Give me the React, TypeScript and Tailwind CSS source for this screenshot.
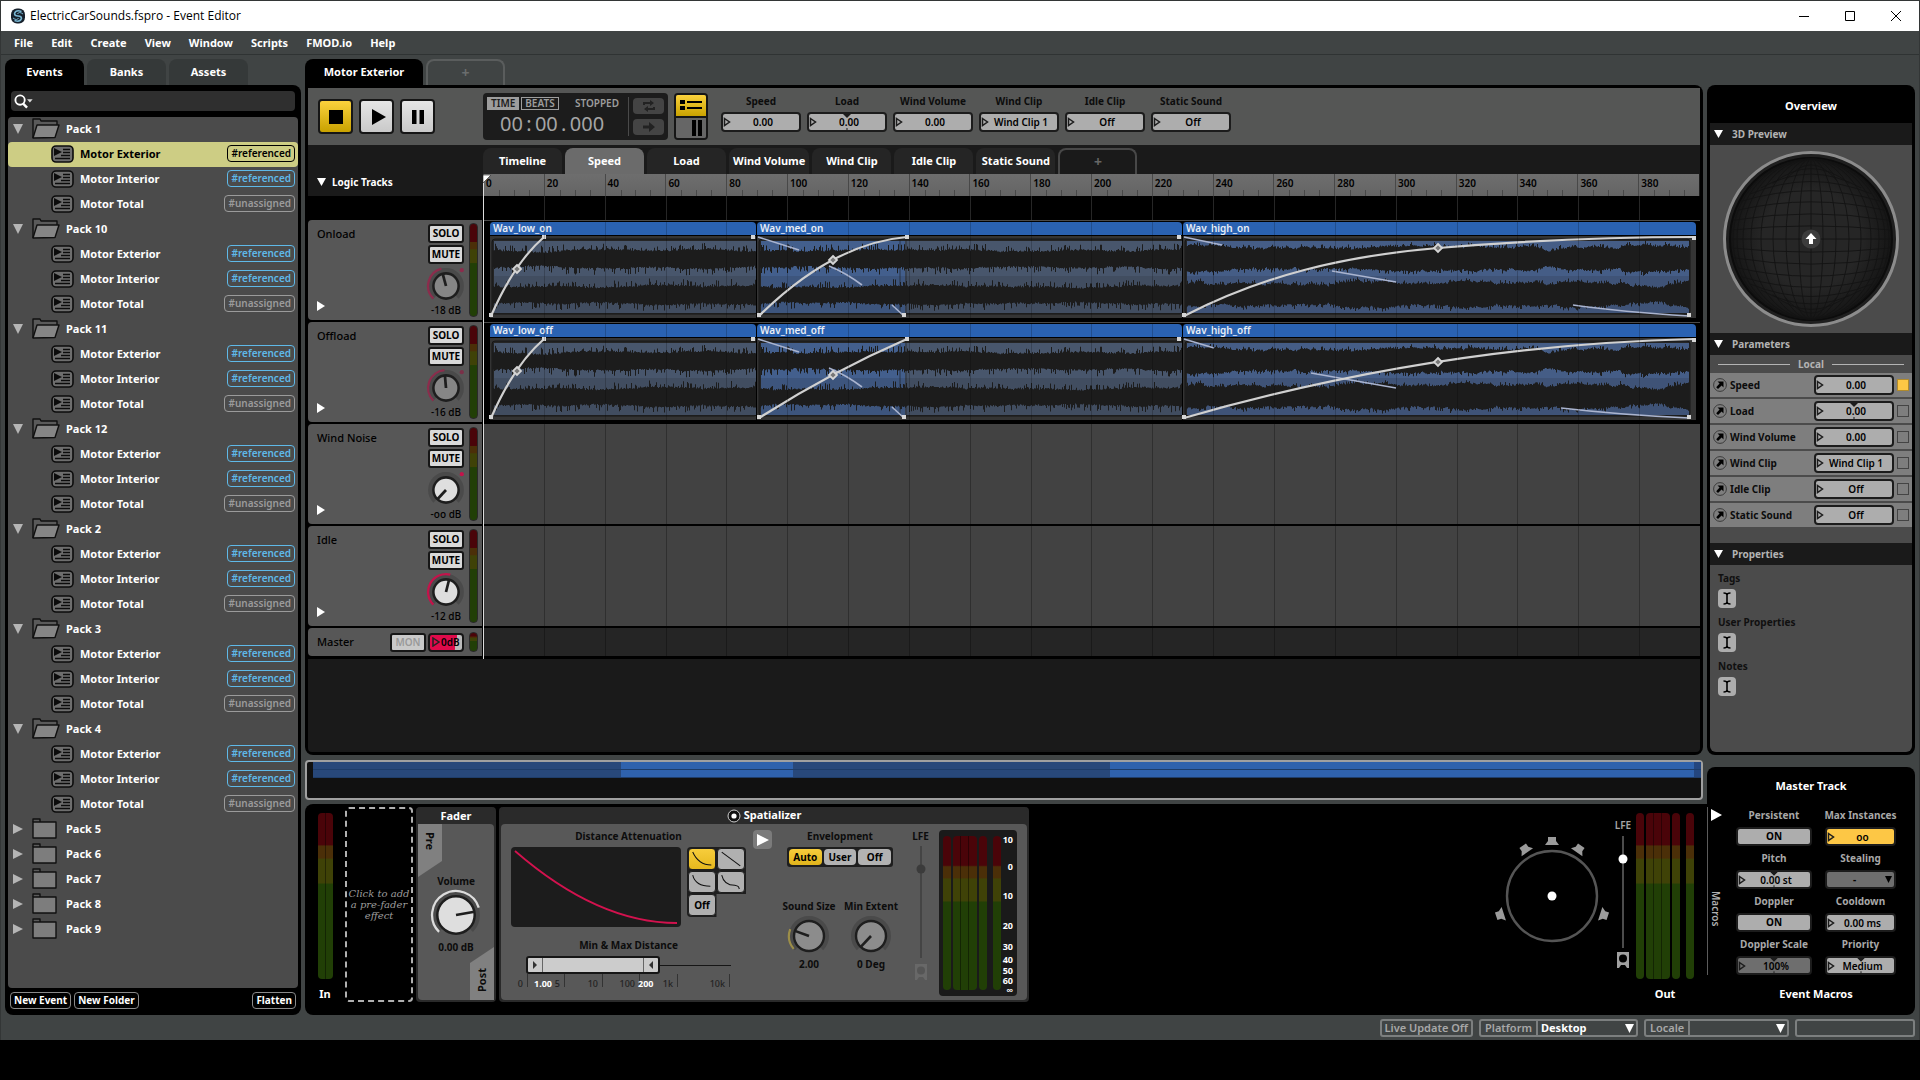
import React from 'react';

/* ---------- shared data ---------- */

const OPEN_PACKS = ['Pack 1', 'Pack 10', 'Pack 11', 'Pack 12', 'Pack 2', 'Pack 3', 'Pack 4'];
const CLOSED_PACKS = ['Pack 5', 'Pack 6', 'Pack 7', 'Pack 8', 'Pack 9'];
const EVENTS = [
  { name: 'Motor Exterior', tag: '#referenced' },
  { name: 'Motor Interior', tag: '#referenced' },
  { name: 'Motor Total', tag: '#unassigned' },
];
const PARAMS = [
  { name: 'Speed', value: '0.00', notch: false, on: true },
  { name: 'Load', value: '0.00', notch: true, on: false },
  { name: 'Wind Volume', value: '0.00', notch: false, on: false },
  { name: 'Wind Clip', value: 'Wind Clip 1', notch: false, on: false },
  { name: 'Idle Clip', value: 'Off', notch: false, on: false },
  { name: 'Static Sound', value: 'Off', notch: false, on: false },
];
const RULER = Array.from({ length: 20 }, (_, i) => i * 20);

const METER =
  'bg-[linear-gradient(to_bottom,#4a0409_0%,#4a0409_19%,#4b2f08_20%,#4b2f08_27%,#3f4207_28%,#3f4207_42%,#213f06_43%,#213f06_100%)]';

/* ---------- small parts ---------- */

function Tri({ dir, className }: { dir: 'down' | 'right'; className?: string }) {
  return (
    <svg viewBox="0 0 10 10" preserveAspectRatio="none" className={className} fill="currentColor" aria-hidden="true">
      <path d={dir === 'down' ? 'M0 0H10L5 10Z' : 'M0 0L10 5L0 10Z'} />
    </svg>
  );
}

type FieldProps = { label: string; value: string; notch?: boolean; tone?: 'light' | 'dim' | 'yellow'; className?: string };

function Field({ label, value, notch, tone = 'light', className = 'h-5' }: FieldProps) {
  const bg = tone === 'yellow' ? 'bg-[#fdc745]' : tone === 'dim' ? 'bg-[#6e6e6e]' : 'bg-[#adadad]';
  return (
    <span className={`relative flex w-full items-center overflow-hidden rounded border-2 border-[#1c1c1c] ${bg} ${className}`}>
      <svg viewBox="0 0 9 10" className="absolute left-0 h-2.5 w-[9px]" fill="none" stroke="#1c1c1c" strokeWidth="1.5">
        <path d="M1.5 1.5L6.5 5L1.5 8.5Z" />
      </svg>
      {notch && (
        <svg viewBox="0 0 8 16" className="absolute left-1/2 top-0 h-full w-2 -translate-x-1/2" fill="#1c1c1c">
          <path d="M0 0H8L4 4ZM3.5 14H4.5V16H3.5Z" />
        </svg>
      )}
      <input
        aria-label={label}
        defaultValue={value}
        className="relative w-full min-w-0 bg-transparent pl-1 text-center text-[10px] leading-4 font-semibold text-black outline-none"
      />
    </span>
  );
}

type KnobProps = {
  label: string;
  size: string;
  angle: number;
  from?: number;
  to?: number;
  arc?: string;
  face?: string;
  radius?: number;
  dot?: string;
};

function polar(r: number, deg: number) {
  const a = ((deg - 90) * Math.PI) / 180;
  return `${(r * Math.cos(a)).toFixed(2)} ${(r * Math.sin(a)).toFixed(2)}`;
}

function arcPath(r: number, a: number, b: number) {
  return `M${polar(r, a)}A${r} ${r} 0 ${b - a > 180 ? 1 : 0} 1 ${polar(r, b)}`;
}

function Knob({ label, size, angle, from, to, arc = '#d2124e', face = '#888888', radius = 12, dot }: KnobProps) {
  const ring = radius + 4;
  return (
    <span className={`relative block shrink-0 ${size}`}>
      <svg viewBox={`${-ring - 3} ${-ring - 3} ${ring * 2 + 6} ${ring * 2 + 6}`} className="size-full">
        <path d={arcPath(ring - 1, -135, 135)} fill="none" stroke="#4a4a4a" strokeWidth="4" />
        {from !== undefined && to !== undefined && (
          <path d={arcPath(ring + 1, from, to)} fill="none" stroke={arc} strokeWidth="2.2" />
        )}
        <circle r={radius} fill={face} stroke="#1e1e1e" strokeWidth="2.4" />
        <path d={`M0 0L${polar(radius, angle)}`} stroke="#1e1e1e" strokeWidth="2.6" />
        {dot && <circle cx={ring - 1} cy={-ring + 1} r="2" fill={dot} />}
      </svg>
      <input type="range" aria-label={label} className="absolute inset-0 size-full opacity-0" />
    </span>
  );
}

function LevelSlider({ line, thumb }: { line: string; thumb: string }) {
  return (
    <span className="relative block h-28 w-3">
      <svg viewBox="0 0 12 112" className="size-full">
        <path d="M6 0V112" stroke={line} strokeWidth="2" />
        <circle cx="6" cy="23" r="4.5" fill={thumb} />
      </svg>
      <input type="range" aria-label="LFE level" className="absolute inset-0 size-full opacity-0 [writing-mode:vertical-lr]" />
    </span>
  );
}

function SubIcon({ color, hole }: { color: string; hole: string }) {
  return (
    <svg viewBox="0 0 12 16" className="h-4 w-3">
      <path d="M0 0H12V16H10L8 13H4L2 16H0Z" fill={color} />
      <circle cx="6" cy="6.5" r="4" fill={hole} />
    </svg>
  );
}

/* ---------- left browser ---------- */

function FolderOpen() {
  return (
    <svg viewBox="0 0 28 21" className="h-[21px] w-7" stroke="#101010" strokeWidth="1.4" strokeLinejoin="round">
      <path d="M1 20V1H8L9 3H25V7" fill="#5a5a5a" />
      <path d="M1 20L5 7H27L23 19.5Z" fill="#858585" />
    </svg>
  );
}

function FolderClosed() {
  return (
    <svg viewBox="0 0 28 21" className="h-[21px] w-7" stroke="#101010" strokeWidth="1.4" strokeLinejoin="round">
      <path d="M1 4V1H8V4" fill="#5a5a5a" />
      <path d="M1 4H24V20H1Z" fill="#7d7d7d" />
    </svg>
  );
}

function EventIcon() {
  return (
    <svg viewBox="0 0 23 18" className="h-[18px] w-[23px]" stroke="#0c0c0c" strokeWidth="1.6">
      <rect x="1" y="1" width="21" height="16" rx="4" fill="#6e6e6e" />
      <path d="M3 3L11 7L3 11Z" fill="#0c0c0c" stroke="none" />
      <path d="M12 4.5H19M12 7.5H19M10 10.5H19M4 13.5H19" />
    </svg>
  );
}

function Browser() {
  return (
    <section className="flex w-[296px] shrink-0 flex-col">
      <div role="tablist" className="flex gap-[3px]">
        <button role="tab" className="h-[26px] w-[79px] rounded-t-lg bg-black text-[11px] font-bold text-white">Events</button>
        <button role="tab" className="h-[26px] w-[79px] rounded-t-lg bg-[#353939] text-[11px] font-bold text-white">Banks</button>
        <button role="tab" className="h-[26px] w-[79px] rounded-t-lg bg-[#353939] text-[11px] font-bold text-white">Assets</button>
      </div>
      <div className="flex flex-1 flex-col rounded-lg rounded-tl-none bg-black px-[3px] pt-1.5 pb-1.5">
        <label className="mx-[3px] mb-1.5 flex h-5 items-center rounded bg-[#2f2f2f] pl-[3px]">
          <svg viewBox="0 0 20 15" className="h-[15px] w-5" fill="none" stroke="white" strokeWidth="2">
            <circle cx="6.5" cy="6" r="5" />
            <path d="M10 10L14 14" strokeWidth="2.6" />
            <path d="M14 5H20L17 8.5Z" fill="#ddd" stroke="none" />
          </svg>
          <input aria-label="Search events" className="w-full bg-transparent text-[11px] text-white outline-none" />
        </label>
        <ul className="flex-1 rounded bg-[#4b4b4b] text-[11px] leading-4 font-bold text-white">
          {OPEN_PACKS.map((pack, p) => (
            <li key={pack}>
              <button className="flex h-[25px] w-full items-center pb-0.5 pl-[5px]">
                <Tri dir="down" className="size-[10px] text-[#b5b5b5]" />
                <span className="ml-[9px]"><FolderOpen /></span>
                <span className="ml-1.5">{pack}</span>
              </button>
              <ul>
                {EVENTS.map((event, e) => {
                  const selected = p === 0 && e === 0;
                  const tagTone = selected
                    ? 'border-black text-black'
                    : event.tag === '#referenced'
                      ? 'border-[#5fb9e8] text-[#5fb9e8]'
                      : 'border-[#9b9b9b] text-[#9b9b9b]';
                  return (
                    <li key={event.name}>
                      <button
                        className={`flex h-[25px] w-full items-center rounded-sm pr-[3px] pb-0.5 pl-[43px] ${selected ? 'bg-[#cdcd84] text-black' : ''}`}
                      >
                        <EventIcon />
                        <span className="ml-1.5">{event.name}</span>
                        <span className={`ml-auto rounded border px-[3px] text-[10px] leading-[15px] font-semibold ${tagTone}`}>{event.tag}</span>
                      </button>
                    </li>
                  );
                })}
              </ul>
            </li>
          ))}
          {CLOSED_PACKS.map((pack) => (
            <li key={pack}>
              <button className="flex h-[25px] w-full items-center pb-0.5 pl-[5px]">
                <Tri dir="right" className="size-[10px] text-[#b5b5b5]" />
                <span className="ml-[9px]"><FolderClosed /></span>
                <span className="ml-1.5">{pack}</span>
              </button>
            </li>
          ))}
        </ul>
        <div className="mt-1 flex gap-[3px] px-0.5 text-[10px] leading-[15px] font-bold text-white">
          <button className="rounded border border-[#8a8a8a] px-[3px]">New Event</button>
          <button className="rounded border border-[#8a8a8a] px-[3px]">New Folder</button>
          <button className="ml-auto rounded border border-[#8a8a8a] px-[3px]">Flatten</button>
        </div>
      </div>
    </section>
  );
}

/* ---------- toolbar ---------- */

function Transport() {
  const light = 'bg-[linear-gradient(#e6e6e6,#c9c9c9)]';
  const yellow = 'bg-[linear-gradient(#fbd23d,#c9a200)]';
  const box = 'flex size-[35px] items-center justify-center rounded border-2 border-[#161616]';
  return (
    <div className="flex h-[57px] shrink-0 items-center bg-[#555655] pl-[10px]">
      <div className="flex w-[165px] gap-1.5">
        <button aria-label="Stop" className={`${box} ${yellow}`}><span className="size-[14px] bg-black" /></button>
        <button aria-label="Play" className={`${box} ${light}`}>
          <svg viewBox="0 0 14 16" className="ml-1 h-4 w-[14px]"><path d="M0 0L14 8L0 16Z" /></svg>
        </button>
        <button aria-label="Pause" className={`${box} ${light}`}>
          <svg viewBox="0 0 12 14" className="h-[14px] w-3"><path d="M0 0H4.5V14H0ZM7.5 0H12V14H7.5Z" /></svg>
        </button>
      </div>
      <div className="flex h-[47px] w-[185px] rounded bg-[#1c1c1c] p-1">
        <div className="flex w-[142px] flex-col border-r border-[#4a4a4a]">
          <div className="flex items-center gap-0.5 text-[10px] leading-[11px] text-[#9d9d9d]">
            <button className="border border-[#9d9d9d] bg-[#9d9d9d] px-[3px] font-semibold text-[#1c1c1c]">TIME</button>
            <button className="border border-[#9d9d9d] px-[3px] font-semibold">BEATS</button>
            <span className="ml-auto pr-[9px] font-semibold">STOPPED</span>
          </div>
          <div className="flex pt-0.5 pl-[13px] text-xl leading-6 text-[#a5a5a5]">
            <span>00</span><span className="w-3 text-center">:</span><span>00</span><span className="w-3 text-center">.</span><span>000</span>
          </div>
        </div>
        <div className="flex flex-col gap-[5px] pt-px pl-1">
          <button aria-label="Loop" className="flex h-4 w-[31px] items-center justify-center rounded-sm bg-[#444444]">
            <svg viewBox="0 0 14 12" className="h-3 w-3.5" fill="none" stroke="#222" strokeWidth="2">
              <path d="M2 5V3H9M12 7V9H5" /><path d="M8 0L12 3L8 6ZM6 6L2 9L6 12Z" fill="#222" stroke="none" />
            </svg>
          </button>
          <button aria-label="Follow" className="flex h-4 w-[31px] items-center justify-center rounded-sm bg-[#444444]">
            <svg viewBox="0 0 12 10" className="h-2.5 w-3" fill="#222"><path d="M0 3.5H6V0L12 5L6 10V6.5H0Z" /></svg>
          </button>
        </div>
      </div>
      <div className="ml-1.5 flex h-[47px] w-[34px] flex-col overflow-hidden rounded border-2 border-[#161616]">
        <button aria-label="Tracks view" className={`flex flex-1 items-center justify-center border-b border-[#161616] ${yellow}`}>
          <svg viewBox="0 0 24 10" className="h-2.5 w-6"><path d="M1 0H6V4H1ZM8 1H23V3H8ZM1 6H6V10H1ZM8 7H23V9H8Z" /></svg>
        </button>
        <button aria-label="Mixer view" className="flex flex-1 items-center justify-end border-t border-[#161616] bg-[#666] pr-1">
          <svg viewBox="0 0 10 16" className="h-4 w-2.5"><path d="M0 0H4V16H0ZM6 0H10V16H6Z" /></svg>
        </button>
      </div>
      <div className="mt-[5px] ml-[13px] flex gap-1.5 self-start">
        {PARAMS.map((p) => (
          <label key={p.name} className="flex w-20 flex-col items-center gap-[3px] text-[10px] leading-4 font-bold text-[#0c0c0c]">
            {p.name}
            <Field label={p.name} value={p.value} notch={p.notch} />
          </label>
        ))}
      </div>
    </div>
  );
}

/* ---------- waveforms ---------- */

function makeRandom(seed: number) {
  let s = seed;
  return () => {
    s = (s * 16807) % 2147483647;
    return s / 2147483647;
  };
}

function wavePath(seed: number, width: number, x0: number, top: number, bottom: number, smooth: boolean) {
  const rnd = makeRandom(seed);
  const upper: string[] = [];
  const lower: string[] = [];
  const reach = smooth ? 4 : 7;
  let drift = 0;
  for (let x = x0; x < width; x += 1) {
    drift = drift * 0.93 + (rnd() - 0.5) * (smooth ? 2 : 0.8);
    const swell = Math.sin(x / 17 + seed) * 0.8 + Math.sin(x / 41 + seed * 2) * 0.8;
    const spikeA = rnd() > 0.66 ? rnd() * reach : rnd() * 1.5;
    const spikeB = rnd() > 0.66 ? rnd() * reach : rnd() * 1.5;
    const body = drift + swell;
    const hi = (top - body * 0.8 - spikeA).toFixed(1);
    const lo = (bottom + body * 0.8 + spikeB).toFixed(1);
    upper.push(`${x} ${hi}L${x + 1} ${hi}`);
    lower.unshift(`${x + 1} ${lo}L${x} ${lo}`);
  }
  return `M${upper.join('L')}L${lower.join('L')}Z`;
}

type Clip = {
  id: string;
  seed: number;
  width: number;
  tint: string;
  hot?: number;
  smooth?: boolean;
  curve: string;
  ends: [number, number][];
  node: [number, number];
  ghosts: string[];
};

const LOW = { seed: 77, width: 267, tint: '#48566c', curve: 'M2 80Q25 27 55 1', ends: [[2, 79], [55, 1], [264, 1]] as [number, number][], node: [28, 33] as [number, number], ghosts: [] as string[] };
const MED = { seed: 1931, width: 426, tint: '#48566c', hot: 148, ends: [[3, 79], [151, 1], [423, 1], [148, 79]] as [number, number][] };
const HIGH = { seed: 4242, width: 514, tint: '#455d86', smooth: true, ends: [[2, 79], [512, 2], [507, 79]] as [number, number][] };

const MED_GHOSTS = ['M2 1L43 14', 'M73 30Q90 37 106 49', 'M136 69L148 80'];

const CLIPS: Record<string, Clip[]> = {
  Onload: [
    { ...LOW, id: 'Wav_low_on' },
    { ...MED, id: 'Wav_med_on', curve: 'M3 80Q77 7 151 1', node: [77, 24], ghosts: MED_GHOSTS },
    { ...HIGH, id: 'Wav_high_on', curve: 'M2 80C80 40 160 20 256 12S430 1 512 1', node: [256, 12], ghosts: ['M2 1L40 9', 'M150 35L214 46', 'M391 69Q440 76 507 80'] },
  ],
  Offload: [
    { ...LOW, id: 'Wav_low_off' },
    { ...MED, id: 'Wav_med_off', curve: 'M3 80Q77 33 151 1', node: [77, 37], ghosts: MED_GHOSTS },
    { ...HIGH, id: 'Wav_high_off', curve: 'M2 80Q256 7 512 1', node: [256, 24], ghosts: ['M2 1L32 10', 'M129 35L214 50', 'M379 70Q440 77 507 80'] },
  ],
};

function ClipBody({ clip }: { clip: Clip }) {
  const w = clip.width;
  const left = 4;
  const right = clip.smooth ? w - 7 : w;
  const [t1, b1, t2, b2] = clip.smooth ? [12, 33, 48, 69] : [15, 31, 51, 67];
  return (
    <svg viewBox={`0 0 ${w} 82`} preserveAspectRatio="none" className="block h-[82px] w-full overflow-visible">
      <rect width={w} height="82" fill="#343434" />
      <rect x={left - 1} y="3" width={right - left + 2} height="75" rx="3" fill="#252525" stroke="#161616" />
      <rect x={left + 1} y="5" width={right - left - 1} height="72" fill={clip.tint} />
      {clip.hot && <rect x={left + 1} y="5" width={clip.hot - left} height="72" fill="#435f8d" />}
      <rect x={left + 1} y="40" width={right - left - 1} height="37" fill="#1e1e1e" opacity="0.14" />
      <path d={wavePath(clip.seed, right, left, t1, b1, !!clip.smooth)} fill="#1c1c1c" />
      <path d={wavePath(clip.seed + 9, right, left, t2, b2, !!clip.smooth)} fill="#1c1c1c" />
      {clip.hot && <path d={`M${clip.hot - 4} 4V77M${clip.hot + 2} 2V80`} stroke="#1c1c1c" opacity="0.6" />}
      <path d="M0.5 0V82" stroke="#000" />
      {clip.ghosts.map((d) => (
        <path key={d} d={d} fill="none" stroke="#aab4cf" strokeWidth="1.6" />
      ))}
      <path d={clip.curve} fill="none" stroke="#d0d0d0" strokeWidth="2.2" />
      {clip.ends.map(([x, y]) => (
        <rect key={`${x}-${y}`} x={x - 2} y={y - 2} width="4" height="4" fill="#d6d6d6" />
      ))}
      <path
        d={`M${clip.node[0]} ${clip.node[1] - 4}l4 4l-4 4l-4 -4Z`}
        fill="#777"
        stroke="#d6d6d6"
        strokeWidth="1.8"
      />
    </svg>
  );
}

function GridLines({ className }: { className: string }) {
  return (
    <div className={`pointer-events-none absolute inset-0 grid grid-cols-20 ${className}`}>
      {RULER.map((n) => (
        <span key={n} className="border-l border-inherit first:border-transparent" />
      ))}
    </div>
  );
}

function Lane({ name }: { name: string }) {
  const clips = CLIPS[name];
  return (
    <div className={`relative flex-1 ${clips ? 'border-t border-[#4a4a4a] bg-black' : 'bg-[#424242]'}`}>
      {clips && (
        <div className="grid grid-cols-[267fr_426fr_514fr] pt-px pr-1 pl-1.5">
          {clips.map((clip) => (
            <div key={clip.id} className="min-w-0">
              <p className="h-[13px] truncate rounded-t-sm border-l border-black bg-[#2a62b2] pl-[3px] text-[10px] leading-[13px] font-semibold text-white/90">
                {clip.id}
              </p>
              <div className="border-t border-black"><ClipBody clip={clip} /></div>
            </div>
          ))}
        </div>
      )}
      <GridLines className={clips ? 'border-black/20' : 'border-[#2f2f2f]'} />
    </div>
  );
}

const PALE = 'rounded-[3px] border-2 border-[#161616] bg-[#d9d9d9] text-[10px] leading-[15px] font-bold text-black w-9';

const TRACKS = [
  { name: 'Onload', db: '-18 dB', angle: -15, arc: '#8c2c4c', from: -135, to: -15, face: '#868686', dot: '#8c2c4c' },
  { name: 'Offload', db: '-16 dB', angle: -5, arc: '#8c2c4c', from: -135, to: -5, face: '#868686', dot: '#7a3048' },
  { name: 'Wind Noise', db: '-oo dB', angle: -137, face: '#dedede', dot: '#c4134b' },
  { name: 'Idle', db: '-12 dB', angle: 14, arc: '#c4134b', from: -135, to: 14, face: '#dedede' },
];

function Tracks() {
  return (
    <div className="flex flex-col gap-0.5 bg-black pb-[3px]">
      {TRACKS.map((t) => (
        <div key={t.name} className="flex h-[100px]">
          <div className="flex w-[174px] shrink-0 justify-between rounded-l bg-[#575757] py-[3px] pr-1 pl-[9px]">
            <div className="flex flex-col justify-between pt-0.5 pb-1.5">
              <span className="text-[11px] leading-[18px] font-medium text-black">{t.name}</span>
              <button aria-label={`Expand ${t.name}`}><Tri dir="right" className="h-[10px] w-2 text-white" /></button>
            </div>
            <div className="flex gap-[5px]">
              <div className="flex w-9 flex-col items-center gap-0.5 pt-px">
                <button className={`${PALE} h-[19px]`}>SOLO</button>
                <button className={`${PALE} h-[19px]`}>MUTE</button>
                <Knob label={`${t.name} volume`} size="size-[40px]" angle={t.angle} from={t.from} to={t.to} arc={t.arc} face={t.face} dot={t.dot} />
                <span className="-mt-[5px] text-[10px] leading-[14px] font-medium whitespace-nowrap text-black">{t.db}</span>
              </div>
              <span className={`w-[9px] rounded-sm border border-[#2a2a2a] ${METER}`} />
            </div>
          </div>
          <span className="w-px bg-black" />
          <Lane name={t.name} />
        </div>
      ))}
      <div className="flex h-7">
        <div className="flex w-[174px] shrink-0 items-center rounded-l bg-[#575757] pr-1 pl-[9px]">
          <span className="text-[11px] font-medium text-black">Master</span>
          <button className="ml-auto h-[19px] w-9 rounded-[3px] border-2 border-[#161616] bg-[#c9c9c9] text-[10px] leading-[15px] font-semibold text-[#999]">MON</button>
          <button className="ml-0.5 flex h-[19px] w-9 items-center rounded border-2 border-[#161616] bg-[linear-gradient(100deg,#df0b4b_78%,#bbb_79%)] pl-0.5 text-[10px] leading-[15px] font-semibold text-black">
            <svg viewBox="0 0 8 10" className="mr-px h-2.5 w-2 shrink-0" fill="none" stroke="#222" strokeWidth="1.5"><path d="M1 1L7 5L1 9Z" /></svg>
            0dB
          </button>
          <span className={`ml-[5px] h-5 w-[9px] rounded-sm border border-[#2a2a2a] ${METER}`} />
        </div>
        <span className="w-px bg-black" />
        <div className="relative flex-1 bg-[#252525]"><GridLines className="border-[#1a1a1a]" /></div>
      </div>
    </div>
  );
}

/* ---------- editor ---------- */

function Editor() {
  const tab = 'h-[26px] min-w-[79px] rounded-t-lg px-1 text-[11px] font-bold text-white';
  return (
    <>
      <div role="tablist" className="flex gap-[3px]">
        <button role="tab" className="h-[26px] w-[118px] rounded-t-lg bg-black text-[11px] font-bold text-white">Motor Exterior</button>
        <button aria-label="New tab" className="h-[26px] w-[79px] rounded-t-lg border-2 border-b-0 border-[#5a5d5d] text-sm font-bold text-[#6a6d6d]">+</button>
      </div>
      <div className="flex min-h-0 flex-1 flex-col rounded-lg rounded-tl-none bg-black p-[3px]">
        <Transport />
        <div className="relative">
          <div className="flex bg-[#1a1a1a]">
            <div className="flex w-[175px] shrink-0 items-end pb-[6px] pl-[9px]">
              <button className="flex items-center gap-1.5 text-[10px] leading-4 font-bold text-white">
                <Tri dir="down" className="h-2 w-[9px]" />
                Logic Tracks
              </button>
            </div>
            <div className="min-w-0 flex-1">
              <div role="tablist" className="flex gap-[3px] pt-[3px]">
                {['Timeline', ...PARAMS.map((p) => p.name)].map((name) => (
                  <button key={name} role="tab" className={`${tab} ${name === 'Speed' ? 'bg-[#6b6b6b]' : 'bg-[#252525]'}`}>{name}</button>
                ))}
                <button aria-label="Add sheet" className="h-[26px] w-[79px] rounded-t-lg border-2 border-b-0 border-[#484848] text-sm font-bold text-[#666]">+</button>
              </div>
              <div className="mr-px grid h-[22px] grid-cols-20 bg-[linear-gradient(#6e6e6e,#646464)] text-[10px] leading-[18px] font-semibold text-black">
                {RULER.map((n) => (
                  <div key={n} className="relative border-l border-[#484848] pl-0.5">
                    {n}
                    <div className="absolute inset-x-0 bottom-0 grid h-1.5 grid-cols-4">
                      <span /><span className="border-l border-[#484848]" /><span className="border-l border-[#484848]" /><span className="border-l border-[#484848]" />
                    </div>
                  </div>
                ))}
              </div>
            </div>
          </div>
          <div className="flex h-6 bg-black pl-[175px]"><div className="relative flex-1"><GridLines className="border-[#262626]" /></div></div>
          <Tracks />
          <div className="absolute top-[30px] bottom-0 left-[175px] w-px bg-[#dcdcdc]">
            <svg viewBox="0 0 9 8" className="h-2 w-[9px]"><path d="M0 0H8L0 8Z" fill="#fff" stroke="#222" strokeWidth="0.6" /></svg>
          </div>
        </div>
        <div className="flex-1 rounded-b bg-[#1a1a1a]" />
      </div>
    </>
  );
}

function OverviewStrip() {
  return (
    <div className="mt-[5px] h-10 rounded-sm border-2 border-[#a0a0a0] bg-[#111111] pl-1.5">
      {[0, 1].map((row) => (
        <div key={row} className="flex h-2 border-b border-[#1f3d69]">
          <span className="basis-[22.2%] bg-[#28487a]" />
          <span className="basis-[12.4%] bg-[#2f62ad]" />
          <span className="basis-[22.8%] bg-[#28487a]" />
          <span className="flex-1 bg-[#2f62ad]" />
          <span className="w-[7px] bg-[#24467f]" />
        </div>
      ))}
    </div>
  );
}

/* ---------- effect deck ---------- */

function MeterBank({ groups, className }: { groups: string[]; className: string }) {
  return (
    <div className={`flex ${className}`}>
      {groups.map((g, i) => (
        <span key={i} className={`${g} ${METER}`} />
      ))}
    </div>
  );
}

const OUT_BARS = [
  'w-2 rounded-sm mr-0.5',
  'w-2 rounded-l-sm border-r border-black/40',
  'w-2 border-r border-black/40',
  'w-2 rounded-r-sm mr-0.5',
  'w-2 rounded-sm mr-1.5',
  'w-2 rounded-sm',
];

function Spatializer() {
  const label = 'text-[10px] leading-4 font-bold text-[#0c0c0c] text-center whitespace-nowrap';
  const curves = ['M4 3C8 12 14 17 24 17', 'M4 3L24 18', 'M4 3C6 11 12 15 23 15', 'M4 3C6 12 12 14 18 14C22 15 22 15 23 18'];
  return (
    <section className="flex w-[530px] shrink-0 flex-col rounded border-2 border-t-0 border-[#2a2a2a] bg-[#2a2a2a]">
      <h3 className="flex h-[17px] items-center justify-center gap-[3px] text-[11px] font-bold text-white">
        <svg viewBox="0 0 14 14" className="size-3.5"><circle cx="7" cy="7" r="6" fill="#111" stroke="#ccc" /><circle cx="7" cy="7" r="2.6" fill="#fff" /></svg>
        Spatializer
      </h3>
      <div className="flex flex-1 rounded-sm bg-[#585858]">
        <div className="w-[245px] pt-1 pl-[10px]">
          <p className={label}>Distance Attenuation</p>
          <div className="mt-[3px] flex gap-1.5">
            <svg viewBox="0 0 170 80" className="h-20 w-[170px] rounded bg-[#1c1c1c]">
              <path d="M4 4C50 44 105 76 166 76" fill="none" stroke="#d2124e" strokeWidth="1.8" />
            </svg>
            <div className="grid w-[59px] grid-cols-2 gap-px self-start rounded bg-[#1e1e1e] p-px [clip-path:polygon(0_0,100%_0,100%_67%,50%_67%,50%_100%,0_100%)]">
              {curves.map((d, i) => (
                <button
                  key={d}
                  aria-label={`Curve ${i + 1}`}
                  className={`h-[22px] rounded-sm border border-[#1e1e1e] ${i === 0 ? 'bg-[linear-gradient(#f7cd3c,#e6b81e)]' : 'bg-[#b0b0b0]'}`}
                >
                  <svg viewBox="0 0 28 21" className="size-full" fill="none" stroke="#111" strokeWidth="1.1"><path d={d} /></svg>
                </button>
              ))}
              <button className="h-[22px] rounded-sm border border-[#1e1e1e] bg-[#b0b0b0] text-[10px] font-bold text-black">Off</button>
            </div>
          </div>
          <p className={`${label} mt-[10px]`}>Min &amp; Max Distance</p>
          <div className="mt-[3px] ml-[15px] flex w-[205px] items-center">
            <div className="relative flex h-[18px] w-[134px] items-center justify-between rounded-[3px] border-2 border-[#161616] bg-[#cccccc] text-[#333]">
              <span className="flex h-full w-[15px] items-center justify-center border-r border-[#666]"><Tri dir="right" className="h-2 w-1" /></span>
              <span className="flex h-full w-[15px] items-center justify-center border-l border-[#666]"><Tri dir="right" className="h-2 w-1 rotate-180" /></span>
              <input type="range" aria-label="Distance range" className="absolute inset-0 size-full opacity-0" />
            </div>
            <span className="h-px flex-1 bg-[#161616]" />
          </div>
          <div className="flex h-[13px] w-[219px] text-[9px] leading-5 font-medium text-[#222] *:flex *:border-r *:border-[#333] *:pr-1">
            <span className="w-[17px] justify-end">0</span>
            <span className="w-[37px] justify-between pl-1.5"><b className="text-white">1.00</b>5</span>
            <span className="w-[38px] justify-end">10</span>
            <span className="w-[37px] justify-end">100</span>
            <span className="w-[38px] justify-between"><b className="-ml-0.5 text-white">200</b>1k</span>
            <span className="w-[52px] justify-end">10k</span>
          </div>
        </div>
        <div className="w-8 pt-1.5 pl-[7px]">
          <button aria-label="Preview" className="flex size-[19px] items-center justify-center rounded bg-[#7b7b7b]"><Tri dir="right" className="size-3 text-white" /></button>
        </div>
        <div className="w-[124px] pt-1">
          <p className={label}>Envelopment</p>
          <div className="mx-auto mt-[3px] flex w-[106px] gap-0.5 rounded-[3px] bg-[#1e1e1e] p-0.5 text-[10px] leading-4 font-bold text-black">
            <button className="flex-1 rounded-sm bg-[linear-gradient(#f7cd3c,#e0b41c)]">Auto</button>
            <button className="flex-1 rounded-sm bg-[#b2b2b2]">User</button>
            <button className="flex-1 rounded-sm bg-[#b2b2b2]">Off</button>
          </div>
          <div className="mt-[31px] grid grid-cols-2">
            <div className="flex flex-col items-center">
              <p className={label}>Sound Size</p>
              <Knob label="Sound size" size="size-[44px]" angle={-70} from={-130} to={-70} arc="#9c8e48" radius={15} face="#8c8c8c" />
              <p className={`${label} -mt-0.5`}>2.00</p>
            </div>
            <div className="flex flex-col items-center">
              <p className={label}>Min Extent</p>
              <Knob label="Minimum extent" size="size-[44px]" angle={-137} radius={15} face="#8c8c8c" />
              <p className={`${label} -mt-0.5`}>0 Deg</p>
            </div>
          </div>
        </div>
        <div className="flex w-[37px] flex-col items-center pt-1">
          <p className={`${label} mb-0.5`}>LFE</p>
          <LevelSlider line="#444444" thumb="#3b3b3b" />
          <span className="mt-1.5"><SubIcon color="#686868" hole="#555555" /></span>
        </div>
        <div className="mt-1.5 flex h-[166px] w-[78px] justify-between rounded bg-[#1a1a1a] p-1 pt-1.5 pb-1.5">
          <MeterBank className="h-full" groups={OUT_BARS} />
          <div className="relative w-3 text-right text-[9px] leading-[9px] font-bold text-white">
            {[['10', 3], ['0', 30], ['10', 59], ['20', 89], ['30', 110], ['40', 123], ['50', 134], ['60', 144], ['∞', 153]].map(([t, y], i) => (
              <span key={i} className="absolute right-0 -translate-y-1/2" style={{ top: y }}>{t}</span>
            ))}
          </div>
        </div>
      </div>
    </section>
  );
}

function Surround() {
  return (
    <svg viewBox="0 0 116 112" className="mt-7 h-28 w-[116px]" role="img" aria-label="Surround panner">
      <circle cx="58" cy="61" r="45" fill="none" stroke="#555" strokeWidth="2.4" />
      <circle cx="58" cy="61" r="4.5" fill="#fff" />
      {[[58, 6, 0], [31, 14, -35], [85, 14, 35], [6, 80, -108], [110, 80, 108]].map(([x, y, r]) => (
        <path key={`${x}-${y}`} transform={`translate(${x} ${y}) rotate(${r})`} d="M-4 -4H4V0L7 4H-7L-4 0Z" fill="#9b9b9b" />
      ))}
    </svg>
  );
}

function Deck() {
  const flap =
    'flex h-[53px] w-6 shrink-0 bg-[#808080] pt-2 text-[11px] leading-6 [clip-path:polygon(0_0,100%_0,100%_70%,0_100%)] [writing-mode:vertical-rl]';
  return (
    <div className="mt-1 -mr-1 flex rounded-tl-lg rounded-bl-lg bg-black pt-[3px] pb-[13px]">
      <div className="flex w-10 shrink-0 flex-col items-center pt-1.5">
        <MeterBank className="h-[166px]" groups={['w-2 rounded-l-sm border-r border-black/40', 'w-[7px] rounded-r-sm']} />
        <span className="mt-[7px] text-[11px] leading-4 font-bold text-white">In</span>
      </div>
      <button className="h-[195px] w-[68px] shrink-0 rounded border-2 border-dashed border-[#b0b0b0] font-['DejaVu_Serif',serif] text-[10px] leading-[11px] text-[#9c9c9c] italic">
        Click to add a pre-fader effect
      </button>
      <section className="mx-[3px] flex w-20 shrink-0 flex-col rounded border-2 border-t-0 border-[#2a2a2a] bg-[#2a2a2a]">
        <h3 className="text-center text-[11px] leading-[17px] font-bold text-white">Fader</h3>
        <div className="flex flex-1 flex-col rounded-sm bg-[#585858] text-[10px] font-bold text-[#0c0c0c]">
          <div className={flap}>Pre</div>
          <div className="-mt-1 flex flex-col items-center">
            <span className="leading-4">Volume</span>
            <Knob label="Fader volume" size="size-[52px]" angle={80} from={-135} to={72} arc="#dcdcdc" radius={18} face="#dedede" />
            <span className="-mt-0.5 leading-4">0.00 dB</span>
          </div>
          <div className={`-mt-2 rotate-180 self-end ${flap}`}>Post</div>
        </div>
      </section>
      <Spatializer />
      <div className="ml-auto flex pr-[13px]">
        <Surround />
        <div className="flex w-[26px] flex-col items-center pt-[10px]">
          <span className="mb-[3px] text-[10px] leading-4 font-semibold text-[#a5a5a5]">LFE</span>
          <LevelSlider line="#4c4c4c" thumb="#ffffff" />
          <span className="mt-1"><SubIcon color="#a0a0a0" hole="#000000" /></span>
        </div>
        <div className="flex flex-col items-center pt-1.5">
          <MeterBank className="h-[166px]" groups={OUT_BARS} />
          <span className="mt-[7px] text-[11px] leading-4 font-bold text-white">Out</span>
        </div>
      </div>
    </div>
  );
}

/* ---------- right column ---------- */

function SectionHead({ title }: { title: string }) {
  return (
    <button className="flex h-[22px] w-full items-center gap-[9px] bg-[#1a1a1a] pl-1 text-[10px] font-bold text-[#b3b3b3]">
      <Tri dir="down" className="h-2 w-[9px] text-white" />
      {title}
    </button>
  );
}

function Sphere() {
  const rings = [12, 25, 38, 50, 60, 68, 74, 78];
  return (
    <svg viewBox="-88 -88 176 176" className="mx-auto size-44" role="img" aria-label="3D preview">
      <defs>
        <radialGradient id="ball">
          <stop offset="0.6" stopColor="#262626" />
          <stop offset="1" stopColor="#151515" />
        </radialGradient>
      </defs>
      <circle r="86.5" fill="#1f1f1f" stroke="#8c8c8c" strokeWidth="3" />
      <circle r="81" fill="url(#ball)" stroke="#0c0c0c" strokeWidth="2" />
      <g fill="none" stroke="#131313" strokeWidth="0.9">
        <path d="M-80 0H80M0 -80V80" />
        {rings.map((r) => {
          const half = Math.sqrt(6400 - r * r);
          const edge = r * 0.75;
          const peak = r * 1.1 + 4;
          const reach = Math.min(Math.sqrt(6400 - edge * edge), half + 8);
          return (
            <g key={r}>
              <ellipse rx={r} ry="80" />
              <path d={`M${-reach} ${-edge}Q0 ${-peak} ${reach} ${-edge}`} />
              <path d={`M${-reach} ${edge}Q0 ${peak} ${reach} ${edge}`} />
            </g>
          );
        })}
      </g>
      <circle r="9.5" fill="#3c3c3c" />
      <path d="M0 -6L5.5 0H2V5H-2V0H-5.5Z" fill="#fff" />
    </svg>
  );
}

function OverviewPanel() {
  return (
    <section className="flex flex-1 flex-col rounded-lg bg-black p-[3px]">
      <h2 className="text-center text-[11px] leading-[35px] font-bold text-white">Overview</h2>
      <SectionHead title="3D Preview" />
      <div className="flex h-[188px] items-center bg-[#4b4b4b]"><Sphere /></div>
      <SectionHead title="Parameters" />
      <div className="flex h-[18px] items-center gap-2 bg-[#4b4b4b] px-2 text-[10px] font-bold text-[#b3b3b3]">
        <span className="h-px flex-1 bg-[#b3b3b3]" />Local<span className="h-px flex-1 bg-[#b3b3b3]" />
      </div>
      <ul className="flex flex-col gap-0.5 bg-[#4b4b4b] pb-4">
        {PARAMS.map((p) => (
          <li key={p.name} className="flex h-6 items-center bg-[#7e7e7e] px-[3px] text-[10px] font-bold text-[#0c0c0c]">
            <svg viewBox="0 0 14 14" className="size-3.5">
              <circle cx="7" cy="7" r="6.4" fill="none" stroke="#333" strokeWidth="0.9" />
              <path d="M4.5 3.5H10.5V9.5L8.6 7.6L5 11L3.2 9.2L6.6 5.6Z" />
            </svg>
            <span className="ml-[3px] flex-1">{p.name}</span>
            <span className="w-20"><Field label={`${p.name} value`} value={p.value} notch={p.notch} /></span>
            <input
              type="checkbox"
              aria-label={`${p.name} active`}
              defaultChecked={p.on}
              className="ml-[3px] size-3 appearance-none border border-[#444] checked:border-[#b08a2c] checked:bg-[#fdc745]"
            />
          </li>
        ))}
      </ul>
      <SectionHead title="Properties" />
      <div className="flex flex-1 flex-col gap-1.5 rounded-b-md bg-[#4b4b4b] px-2 pt-[5px] text-[10px] leading-4 font-bold text-[#101010]">
        {['Tags', 'User Properties', 'Notes'].map((name) => (
          <div key={name} className="flex flex-col items-start gap-[3px]">
            <span>{name}</span>
            <button aria-label={`Edit ${name}`} className="flex h-[19px] w-[18px] items-center justify-center rounded bg-[#adadad]">
              <svg viewBox="0 0 8 13" className="h-[13px] w-2" fill="none" stroke="#000" strokeWidth="1.6"><path d="M0.5 1Q4 1 4 3Q4 1 7.5 1M4 3V10M0.5 12Q4 12 4 10Q4 12 7.5 12" /></svg>
            </button>
          </div>
        ))}
      </div>
    </section>
  );
}

function MacroCell({ title, children }: { title: string; children: React.ReactNode }) {
  return (
    <div className="flex flex-col items-center gap-1 text-[10px] leading-4 font-bold whitespace-nowrap text-[#a8a8a8]">
      {title}
      {children}
    </div>
  );
}

function MasterPanel() {
  const toggle = 'h-[19px] w-full rounded border-2 border-[#1c1c1c] bg-[#adadad] text-[10px] leading-[15px] font-bold text-black';
  return (
    <section className="mt-3 flex flex-col rounded-lg rounded-bl-none bg-black pb-[13px]">
      <h2 className="text-center text-[11px] leading-[38px] font-bold text-white">Master Track</h2>
      <div className="mt-0.5 flex pr-[19px]">
        <div className="flex w-[29px] shrink-0 flex-col items-start border-l border-[#5c5c5c] pt-0.5 pl-[3px]">
          <button aria-label="Collapse macros"><Tri dir="right" className="h-3 w-[11px] text-white" /></button>
          <span className="mt-[70px] text-[10px] leading-[10px] font-semibold text-[#b0b0b0] [writing-mode:vertical-rl]">Macros</span>
        </div>
        <div className="grid flex-1 grid-cols-[minmax(0,76fr)_minmax(0,71fr)] gap-x-[13px] gap-y-1">
          <MacroCell title="Persistent"><button className={toggle}>ON</button></MacroCell>
          <MacroCell title="Max Instances"><Field label="Max instances" value="oo" tone="yellow" className="h-[19px]" /></MacroCell>
          <MacroCell title="Pitch"><Field label="Pitch" value="0.00 st" notch className="h-[19px]" /></MacroCell>
          <MacroCell title="Stealing">
            <span className="relative flex w-full">
              <select aria-label="Stealing" className="h-[19px] w-full appearance-none rounded border-2 border-[#1c1c1c] bg-[#6e6e6e] pr-3 text-center text-[10px] leading-[15px] text-black"><option>-</option></select>
              <Tri dir="down" className="pointer-events-none absolute top-1.5 right-1 h-[7px] w-[7px] text-black" />
            </span>
          </MacroCell>
          <MacroCell title="Doppler"><button className={toggle}>ON</button></MacroCell>
          <MacroCell title="Cooldown"><Field label="Cooldown" value="0.00 ms" className="h-[19px]" /></MacroCell>
          <MacroCell title="Doppler Scale"><Field label="Doppler scale" value="100%" notch tone="dim" className="h-[19px]" /></MacroCell>
          <MacroCell title="Priority"><Field label="Priority" value="Medium" notch className="h-[19px]" /></MacroCell>
        </div>
      </div>
      <p className="mt-[11px] pl-[10px] text-center text-[11px] leading-4 font-bold text-white">Event Macros</p>
    </section>
  );
}

/* ---------- window ---------- */

export default function App() {
  const bar = 'flex h-[18px] items-center rounded-[3px] border-2 border-[#7c7f7f] text-[11px] leading-[14px] font-semibold';
  return (
    <div className="flex min-h-screen flex-col bg-black font-['Noto_Sans',sans-serif]">
      <div className="flex flex-1 flex-col border border-b-0 border-[#333636] bg-[#404444]">
        <header className="flex h-[30px] items-center bg-white pl-[9px]">
          <svg viewBox="0 0 16 16" className="size-4">
            <rect x="1" y="0.5" width="14" height="15" rx="6" fill="#16202b" />
            <path d="M11.5 3.5Q6 1.5 4.5 5.5Q4.500 8 8 8Q11.500 8 11.5 10.500Q10 14.500 4.500 12.500" fill="none" stroke="#79b6d2" strokeWidth="1.5" />
            <path d="M13 6Q9 3 7.500 6M3 10Q7 13 8.500 10" fill="none" stroke="#79b6d2" strokeWidth="1" />
          </svg>
          <h1 className="ml-1 font-['Open_Sans',sans-serif] text-xs text-black">ElectricCarSounds.fspro - Event Editor</h1>
          <div className="ml-auto flex text-black">
            {['M0 5.5H10', 'M0.5 0.5H9.500V9.500H0.500Z', 'M0 0L10 10M10 0L0 10'].map((d, i) => (
              <button key={d} aria-label={['Minimize', 'Maximize', 'Close'][i]} className="flex h-[30px] w-[46px] items-center justify-center">
                <svg viewBox="0 0 10 10" className="size-2.5 overflow-visible" fill="none" stroke="currentColor"><path d={d} /></svg>
              </button>
            ))}
          </div>
        </header>
        <nav className="flex h-6 items-center gap-[18px] border-b border-[#2f3333] pt-px pl-[13px] text-[11px] font-bold text-white">
          {['File', 'Edit', 'Create', 'View', 'Window', 'Scripts', 'FMOD.io', 'Help'].map((m) => (
            <button key={m}>{m}</button>
          ))}
        </nav>
        <main className="flex flex-1 gap-1 px-1 pt-1">
          <Browser />
          <div className="flex min-w-0 flex-1 flex-col">
            <Editor />
            <OverviewStrip />
            <Deck />
          </div>
          <div className="mt-[26px] flex w-[208px] shrink-0 flex-col">
            <OverviewPanel />
            <MasterPanel />
          </div>
        </main>
        <footer className="flex justify-end gap-1.5 px-1 pt-1 pb-[3px] text-[#a8a8a8]">
          <button className={`${bar} px-[3px]`}>Live Update Off</button>
          <label className={`${bar} relative w-[159px]`}>
            <span className="border-r-2 border-[#7c7f7f] px-1">Platform</span>
            <select className="min-w-0 flex-1 appearance-none bg-transparent pl-[3px] font-bold text-white"><option>Desktop</option></select>
            <Tri dir="down" className="pointer-events-none absolute right-0.5 size-[9px] text-white" />
          </label>
          <label className={`${bar} relative w-[145px]`}>
            <span className="border-r-2 border-[#7c7f7f] px-1">Locale</span>
            <select className="min-w-0 flex-1 appearance-none bg-transparent text-white"><option aria-label="None"></option></select>
            <Tri dir="down" className="pointer-events-none absolute right-0.5 size-[9px] text-white" />
          </label>
          <div className={`${bar} w-[120px]`} />
        </footer>
      </div>
      <div className="h-10 bg-black" />
    </div>
  );
}
